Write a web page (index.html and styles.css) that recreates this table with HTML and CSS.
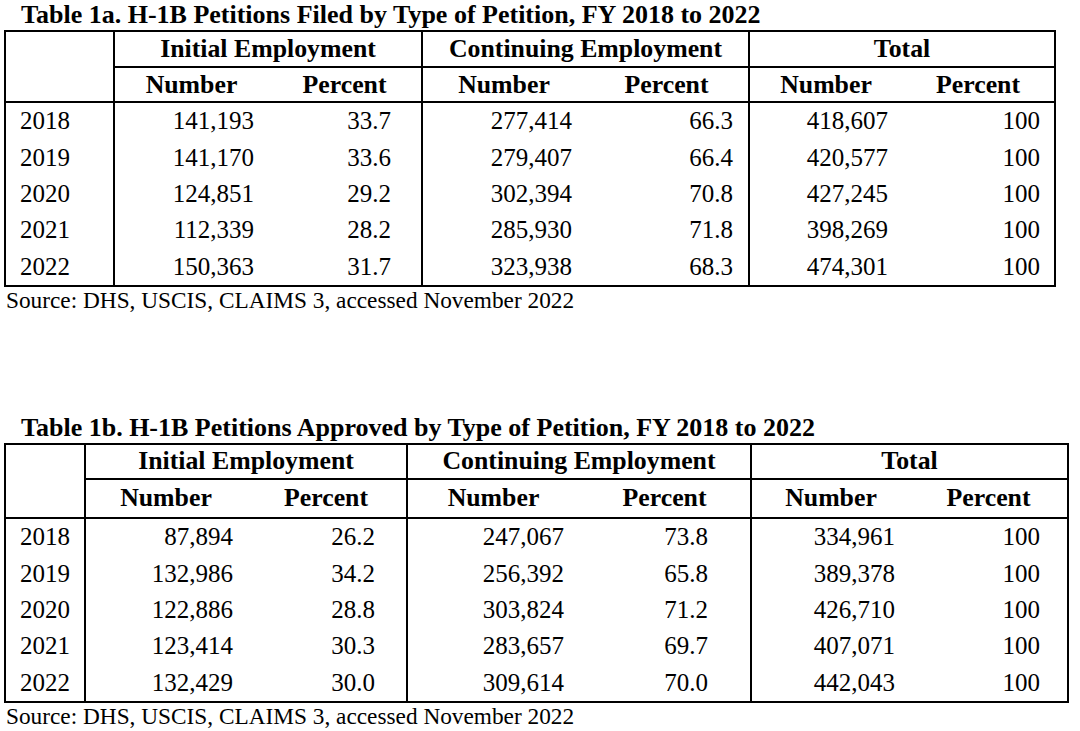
FILE: index.html
```html
<!DOCTYPE html>
<html>
<head>
<meta charset="utf-8">
<link rel="stylesheet" href="styles.css">
</head>
<body>
<div class="page">
  <section class="block block-a">
    <h2 class="title">Table 1a. H-1B Petitions Filed by Type of Petition, FY 2018 to 2022</h2>
    <table class="tbl tbl-a">
      <colgroup>
        <col class="c-year"><col class="c-in"><col class="c-ip"><col class="c-cn"><col class="c-cp"><col class="c-tn"><col class="c-tp">
      </colgroup>
      <thead>
        <tr class="hr1">
          <th class="year-h" rowspan="2"></th>
          <th class="grp" colspan="2">Initial Employment</th>
          <th class="grp" colspan="2">Continuing Employment</th>
          <th class="grp" colspan="2">Total</th>
        </tr>
        <tr class="hr2">
          <th class="gs">Number</th><th>Percent</th>
          <th class="gs">Number</th><th>Percent</th>
          <th class="gs">Number</th><th>Percent</th>
        </tr>
      </thead>
      <tbody>
        <tr><td class="year">2018</td><td class="v in gs">141,193</td><td class="v ip">33.7</td><td class="v cn gs">277,414</td><td class="v cp">66.3</td><td class="v tn gs">418,607</td><td class="v tp">100</td></tr>
        <tr><td class="year">2019</td><td class="v in gs">141,170</td><td class="v ip">33.6</td><td class="v cn gs">279,407</td><td class="v cp">66.4</td><td class="v tn gs">420,577</td><td class="v tp">100</td></tr>
        <tr><td class="year">2020</td><td class="v in gs">124,851</td><td class="v ip">29.2</td><td class="v cn gs">302,394</td><td class="v cp">70.8</td><td class="v tn gs">427,245</td><td class="v tp">100</td></tr>
        <tr><td class="year">2021</td><td class="v in gs">112,339</td><td class="v ip">28.2</td><td class="v cn gs">285,930</td><td class="v cp">71.8</td><td class="v tn gs">398,269</td><td class="v tp">100</td></tr>
        <tr><td class="year">2022</td><td class="v in gs">150,363</td><td class="v ip">31.7</td><td class="v cn gs">323,938</td><td class="v cp">68.3</td><td class="v tn gs">474,301</td><td class="v tp">100</td></tr>
      </tbody>
    </table>
    <p class="source">Source: DHS, USCIS, CLAIMS 3, accessed November 2022</p>
  </section>

  <section class="block block-b">
    <h2 class="title">Table 1b. H-1B Petitions Approved by Type of Petition, FY 2018 to 2022</h2>
    <table class="tbl tbl-b">
      <colgroup>
        <col class="c-year"><col class="c-in"><col class="c-ip"><col class="c-cn"><col class="c-cp"><col class="c-tn"><col class="c-tp">
      </colgroup>
      <thead>
        <tr class="hr1">
          <th class="year-h" rowspan="2"></th>
          <th class="grp" colspan="2">Initial Employment</th>
          <th class="grp" colspan="2">Continuing Employment</th>
          <th class="grp" colspan="2">Total</th>
        </tr>
        <tr class="hr2">
          <th class="gs">Number</th><th>Percent</th>
          <th class="gs">Number</th><th>Percent</th>
          <th class="gs">Number</th><th>Percent</th>
        </tr>
      </thead>
      <tbody>
        <tr><td class="year">2018</td><td class="v in gs">87,894</td><td class="v ip">26.2</td><td class="v cn gs">247,067</td><td class="v cp">73.8</td><td class="v tn gs">334,961</td><td class="v tp">100</td></tr>
        <tr><td class="year">2019</td><td class="v in gs">132,986</td><td class="v ip">34.2</td><td class="v cn gs">256,392</td><td class="v cp">65.8</td><td class="v tn gs">389,378</td><td class="v tp">100</td></tr>
        <tr><td class="year">2020</td><td class="v in gs">122,886</td><td class="v ip">28.8</td><td class="v cn gs">303,824</td><td class="v cp">71.2</td><td class="v tn gs">426,710</td><td class="v tp">100</td></tr>
        <tr><td class="year">2021</td><td class="v in gs">123,414</td><td class="v ip">30.3</td><td class="v cn gs">283,657</td><td class="v cp">69.7</td><td class="v tn gs">407,071</td><td class="v tp">100</td></tr>
        <tr><td class="year">2022</td><td class="v in gs">132,429</td><td class="v ip">30.0</td><td class="v cn gs">309,614</td><td class="v cp">70.0</td><td class="v tn gs">442,043</td><td class="v tp">100</td></tr>
      </tbody>
    </table>
    <p class="source">Source: DHS, USCIS, CLAIMS 3, accessed November 2022</p>
  </section>
</div>
</body>
</html>
```

FILE: styles.css
```css
html, body {
  margin: 0;
  padding: 0;
  background: #fff;
}

body {
  font-family: "Liberation Serif", "Times New Roman", serif;
  color: #000;
}

.page {
  padding: 0 0 0 4px;
}

.title {
  margin: 0;
  padding-left: 17px;
  font-size: 26px;
  font-weight: bold;
  line-height: 30px;
  white-space: nowrap;
}

.block-b {
  margin-top: 100px;
}

.tbl {
  border-collapse: collapse;
  table-layout: fixed;
  border: 2px solid #000;
  font-size: 25px;
}

.tbl th {
  font-weight: bold;
  font-size: 25.8px;
  text-align: center;
  padding: 0;
  border-bottom: 2px solid #000;
}

.tbl td {
  padding: 0;
  white-space: nowrap;
}

.tbl .gs,
.tbl .grp {
  border-left: 2px solid #000;
}

.tbl .year-h {
  border-bottom: 2px solid #000;
}

.tbl .year {
  padding-left: 14px;
  text-align: left;
}

.tbl .v {
  text-align: right;
}

/* Table 1a geometry */
.tbl-a { width: 1050px; }
.tbl-a .c-year { width: 109px; }
.tbl-a .c-in { width: 154px; }
.tbl-a .c-ip { width: 154px; }
.tbl-a .c-cn { width: 163px; }
.tbl-a .c-cp { width: 164px; }
.tbl-a .c-tn { width: 153px; }
.tbl-a .c-tp { width: 153px; }
.tbl-a .hr1 th { height: 34px; }
.tbl-a .hr2 th { height: 33px; }
.tbl-a td { height: 36.4px; }
.tbl-a .in { padding-right: 14px; }
.tbl-a .ip { padding-right: 30px; }
.tbl-a .cn { padding-right: 13px; }
.tbl-a .cp { padding-right: 15px; }
.tbl-a .tn { padding-right: 14px; }
.tbl-a .tp { padding-right: 14px; }

/* Table 1b geometry */
.tbl-b { width: 1063px; }
.tbl-b .c-year { width: 80px; }
.tbl-b .c-in { width: 161px; }
.tbl-b .c-ip { width: 161px; }
.tbl-b .c-cn { width: 172px; }
.tbl-b .c-cp { width: 172px; }
.tbl-b .c-tn { width: 159px; }
.tbl-b .c-tp { width: 158px; }
.tbl-b .hr1 th { height: 33px; }
.tbl-b .hr2 th { height: 37px; }
.tbl-b td { height: 36.4px; }
.tbl-b .in { padding-right: 13px; }
.tbl-b .ip { padding-right: 31px; }
.tbl-b .cn { padding-right: 15px; }
.tbl-b .cp { padding-right: 42px; }
.tbl-b .tn { padding-right: 15px; }
.tbl-b .tp { padding-right: 27px; }

.source {
  margin: 0;
  padding-left: 2px;
  font-size: 23.3px;
  line-height: 26px;
}
```
